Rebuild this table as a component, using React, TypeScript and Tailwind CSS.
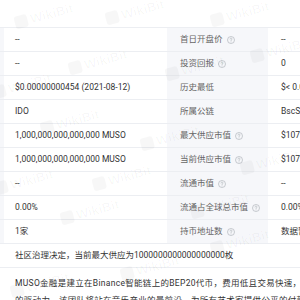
import React from 'react'

type Row = { left: string; label: string; help?: boolean; right: string }

const rows: Row[] = [
    { left: '--', label: '首日开盘价', help: true, right: '--' },
    { left: '--', label: '投资回报', help: true, right: '0' },
    { left: '$0.00000000454 (2021-08-12)', label: '历史最低', right: '$< 0.01' },
    { left: 'IDO', label: '所属公链', right: 'BscScan' },
    { left: '1,000,000,000,000,000 MUSO', label: '最大供应市值', help: true, right: '$1072.52' },
    { left: '1,000,000,000,000,000 MUSO', label: '当前供应市值', help: true, right: '$1072.52' },
    { left: '--', label: '流通市值', help: true, right: '--' },
    { left: '0.00%', label: '流通占全球总市值', help: true, right: '0.00%' },
    { left: '1家', label: '持币地址数', help: true, right: '数据暂无' },
]

const Help: React.FC = () => (
    <svg width="8" height="8" viewBox="0 0 16 16" className="ml-[4px] shrink-0">
        <circle cx="8" cy="8" r="7" fill="none" stroke="#a8acb3" strokeWidth="1.2" />
        <path d="M6 6.2a2 2 0 1 1 2.8 1.8c-.6.3-.8.7-.8 1.3v.4" fill="none" stroke="#a8acb3" strokeWidth="1.2" strokeLinecap="round" />
        <circle cx="8" cy="11.8" r=".8" fill="#a8acb3" />
    </svg>
)

// faint tiled watermark
const marks = [
    { x: 14, y: 6 },
    { x: 105, y: 2 },
    { x: 210, y: 4 },
    { x: 68, y: 52 },
    { x: 165, y: 58 },
    { x: -8, y: 76 },
    { x: 250, y: 40 },
    { x: 40, y: 112 },
    { x: 140, y: 128 },
    { x: 240, y: 152 },
    { x: 92, y: 168 },
    { x: -6, y: 172 },
    { x: 190, y: 196 },
    { x: 60, y: 202 },
    { x: 210, y: 232 },
    { x: 120, y: 258 },
    { x: 10, y: 275 },
]

export default function App() {
    return (
        <div className="relative w-[300px] h-[300px] overflow-hidden bg-white text-[8.5px] text-[#333] font-['Roboto','Noto_Sans_CJK_SC',sans-serif]">
            <div className="h-[27px]" />
            {/* table */}
            <div className="border-t border-[#eceef2]">
                {rows.map((r, i) => (
                    <div key={i} className="flex h-[24px] border-b border-[#eceef2] whitespace-nowrap">
                        <div className="w-[4px] bg-[#f6f7fa]" />
                        <div className="w-[163px] pl-[11px] flex items-center">{r.left}</div>
                        <div className="w-[101px] pl-[13px] flex items-center bg-[#f6f7fa] text-[#666]">
                            {r.label}
                            {r.help && <Help />}
                        </div>
                        <div className="flex-1 pl-[13px] flex items-center overflow-hidden">{r.right}</div>
                    </div>
                ))}
            </div>
            <div className="h-[24px] pl-[15px] flex items-center border-b border-[#eceef2] whitespace-nowrap">
                社区治理决定，当前最大供应为1000000000000000000枚
            </div>
            <p className="pl-[15px] pt-[7px] leading-[17px] whitespace-nowrap tracking-[0.3px]">
                MUSO金融是建立在Binance智能链上的BEP20代币，费用低且交易快速，是音乐行业
                <br />
                的驱动力，该团队将站在音乐产业的最前沿，为所有艺术家提供公平的付款方式。
            </p>
            {marks.map((m, i) => (
                <div
                    key={i}
                    className="absolute pointer-events-none flex items-center gap-[3px] -rotate-[15deg] text-[13px] font-bold text-[rgba(0,0,0,0.03)] font-['Liberation_Sans',sans-serif]"
                    style={{ left: m.x, top: m.y }}
                >
                    <span className="w-[13px] h-[13px] rounded-[3px] bg-[rgba(0,0,0,0.03)]" />
                    WikiBit
                </div>
            ))}
        </div>
    )
}
